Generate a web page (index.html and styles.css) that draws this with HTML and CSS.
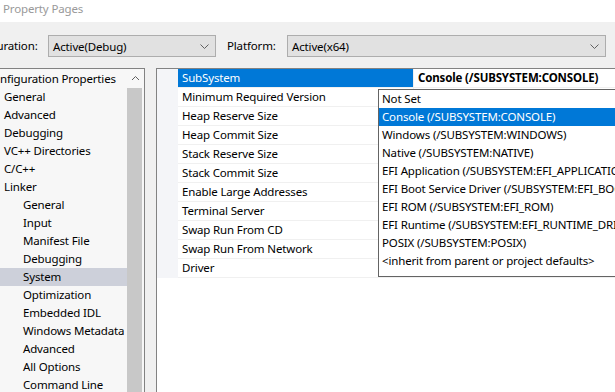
FILE: index.html
```html
<!DOCTYPE html>
<html lang="en">
  <head>
    <meta charset="UTF-8" />
    <title>Property Pages</title>
    <link rel="stylesheet" href="styles.css">
  </head>
  <body>
    <div class="titlebar">Property Pages</div>

    <div class="toolbar">
      <span class="config-label">Configuration:</span>
      <div class="combo combo-config">
        <span>Active(Debug)</span>
        <svg width="9" height="5" viewBox="0 0 9 5"><polyline points="0.5,0.5 4.5,4.5 8.5,0.5" /></svg>
      </div>
      <span class="platform-label">Platform:</span>
      <div class="combo combo-platform">
        <span>Active(x64)</span>
        <svg width="9" height="5" viewBox="0 0 9 5"><polyline points="0.5,0.5 4.5,4.5 8.5,0.5" /></svg>
      </div>
    </div>

    <div class="main">
      <div class="tree-panel">
        <ul class="tree">
          <li class="root">Configuration Properties</li>
          <li>General</li>
          <li>Advanced</li>
          <li>Debugging</li>
          <li>VC++ Directories</li>
          <li>C/C++</li>
          <li>Linker</li>
          <li class="sub">General</li>
          <li class="sub">Input</li>
          <li class="sub">Manifest File</li>
          <li class="sub">Debugging</li>
          <li class="sub selected">System</li>
          <li class="sub">Optimization</li>
          <li class="sub">Embedded IDL</li>
          <li class="sub">Windows Metadata</li>
          <li class="sub">Advanced</li>
          <li class="sub">All Options</li>
          <li class="sub">Command Line</li>
        </ul>
        <div class="scrollbar">
          <div class="scroll-up">
            <svg width="9" height="6" viewBox="0 0 9 6"><polyline points="1,5 4.5,1.5 8,5" /></svg>
          </div>
          <div class="thumb"></div>
        </div>
      </div>

      <div class="grid-panel">
        <div class="grid">
          <div class="row active">
            <div class="gutter"></div>
            <div class="name">SubSystem</div>
            <div class="value">Console (/SUBSYSTEM:CONSOLE)</div>
          </div>
          <div class="row"><div class="gutter"></div><div class="name">Minimum Required Version</div><div class="value"></div></div>
          <div class="row"><div class="gutter"></div><div class="name">Heap Reserve Size</div><div class="value"></div></div>
          <div class="row"><div class="gutter"></div><div class="name">Heap Commit Size</div><div class="value"></div></div>
          <div class="row"><div class="gutter"></div><div class="name">Stack Reserve Size</div><div class="value"></div></div>
          <div class="row"><div class="gutter"></div><div class="name">Stack Commit Size</div><div class="value"></div></div>
          <div class="row"><div class="gutter"></div><div class="name">Enable Large Addresses</div><div class="value"></div></div>
          <div class="row"><div class="gutter"></div><div class="name">Terminal Server</div><div class="value"></div></div>
          <div class="row"><div class="gutter"></div><div class="name">Swap Run From CD</div><div class="value"></div></div>
          <div class="row"><div class="gutter"></div><div class="name">Swap Run From Network</div><div class="value"></div></div>
          <div class="row"><div class="gutter"></div><div class="name">Driver</div><div class="value"></div></div>
        </div>

        <!-- open list of the SubSystem combo -->
        <ul class="dropdown">
          <li>Not Set</li>
          <li class="selected">Console (/SUBSYSTEM:CONSOLE)</li>
          <li>Windows (/SUBSYSTEM:WINDOWS)</li>
          <li>Native (/SUBSYSTEM:NATIVE)</li>
          <li>EFI Application (/SUBSYSTEM:EFI_APPLICATION)</li>
          <li>EFI Boot Service Driver (/SUBSYSTEM:EFI_BOOT_SERVICE_DRIVER)</li>
          <li>EFI ROM (/SUBSYSTEM:EFI_ROM)</li>
          <li>EFI Runtime (/SUBSYSTEM:EFI_RUNTIME_DRIVER)</li>
          <li>POSIX (/SUBSYSTEM:POSIX)</li>
          <li>&lt;inherit from parent or project defaults&gt;</li>
        </ul>
      </div>
    </div>
  </body>
</html>
```

FILE: styles.css
```css
body {
  margin: 0;
  width: 615px;
  height: 392px;
  overflow: hidden;
  background: #f0f0f0;
  font-family: "Noto Sans", sans-serif;
  font-size: 11.5px;
  letter-spacing: -0.15px;
  color: #000;
}

.titlebar {
  height: 22px;
  line-height: 17px;
  padding-left: 3px;
  background: #fff;
  color: #999;
}

/* configuration / platform bar */
.toolbar {
  display: flex;
  align-items: flex-start;
  height: 46px;
  padding-top: 13px;
  box-sizing: border-box;
}

.config-label,
.platform-label {
  line-height: 22px;
  white-space: nowrap;
}

.config-label {
  width: 86px;
  margin-left: -38px;
  padding-right: 12px;
  box-sizing: border-box;
  text-align: right;
}

.platform-label {
  width: 60px;
  margin-left: 11px;
}

.combo {
  height: 22px;
  box-sizing: border-box;
  border: 1px solid #adadad;
  background: #e1e1e1;
  display: flex;
  align-items: center;
  justify-content: space-between;
  padding: 0 6px 0 4px;
}

.combo svg polyline,
.scroll-up svg polyline {
  fill: none;
  stroke: #606060;
  stroke-width: 1;
}

.combo-config {
  width: 168px;
}

.combo-platform {
  width: 319px;
}

.main {
  display: flex;
  height: 324px;
}

/* left tree */
.tree-panel {
  width: 144px;
  border-top: 1px solid #828282;
  border-right: 1px solid #828282;
  background: #f7f7f7;
  display: flex;
}

.tree {
  width: 127px;
  margin: 0;
  padding: 1px 0 0;
  list-style: none;
  overflow: hidden;
}

.tree li {
  height: 18px;
  line-height: 18px;
  padding-left: 4px;
  white-space: nowrap;
}

.tree li.root {
  padding-left: 0;
  margin-left: -14px;
}

.tree li.sub {
  padding-left: 23px;
}

.tree li.selected {
  background: #cdd0da;
}

.scrollbar {
  width: 17px;
  display: flex;
  flex-direction: column;
}

.scroll-up {
  height: 18px;
  display: flex;
  align-items: center;
  justify-content: center;
  padding-right: 1px;
}

.thumb {
  flex-grow: 1;
  margin: 1px 2px 0 0;
  background: #c8c8c8;
}

/* property grid */
.grid-panel {
  flex-grow: 1;
  margin-left: 11px;
  border-top: 1px solid #828282;
  border-left: 1px solid #828282;
  background: #fff;
  position: relative;
}

.row {
  display: flex;
  height: 19px;
}

.row .gutter {
  width: 21px;
  background: #f4f5f8;
}

.row .name,
.row .value {
  box-sizing: border-box;
  height: 19px;
  line-height: 18px;
  border-bottom: 1px solid #f0f0f0;
  padding-left: 4px;
  white-space: nowrap;
}

.row .name {
  width: 235px;
}

.row .value {
  flex-grow: 1;
  border-left: 1px solid #f0f0f0;
}

.row.active .name {
  background: #0078d7;
  color: #fff;
}

.row.active .value {
  font-weight: bold;
}

.dropdown {
  position: absolute;
  left: 221px;
  top: 20px;
  right: -40px;
  margin: 0;
  padding: 0 0 6px;
  list-style: none;
  background: #fff;
  border: 1px solid #646464;
}

.dropdown li {
  height: 18px;
  line-height: 18px;
  padding-left: 3px;
  white-space: nowrap;
  overflow: hidden;
}

.dropdown li.selected {
  background: #0078d7;
  color: #fff;
}
```
